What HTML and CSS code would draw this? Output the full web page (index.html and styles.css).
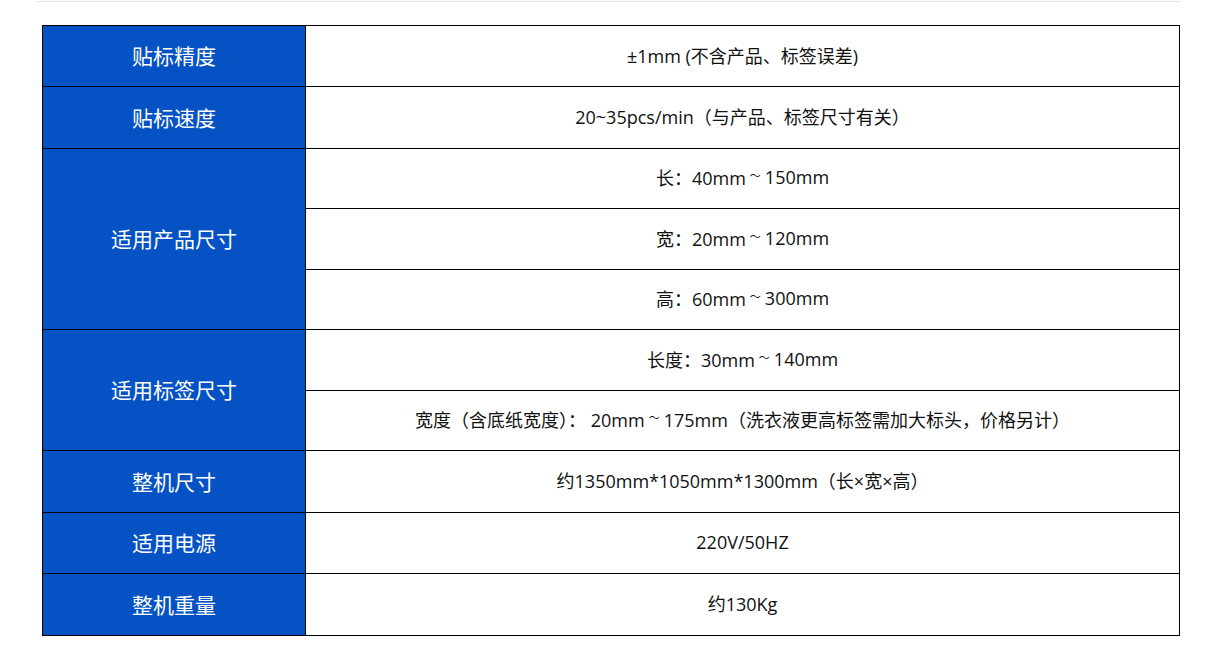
FILE: index.html
```html
<!DOCTYPE html>
<html lang="zh-CN">
<head>
<meta charset="utf-8">
<title>参数</title>
<link rel="stylesheet" href="styles.css">
</head>
<body>
<div class="page">
  <div class="spec">
    <div class="key">贴标精度</div>
    <div class="val">±1mm (不含产品、标签误差)</div>

    <div class="key">贴标速度</div>
    <div class="val">20~35pcs/min（与产品、标签尺寸有关）</div>

    <div class="key span3">适用产品尺寸</div>
    <div class="val">长：40mm<span class="tilde">～</span>150mm</div>
    <div class="val">宽：20mm<span class="tilde">～</span>120mm</div>
    <div class="val">高：60mm<span class="tilde">～</span>300mm</div>

    <div class="key span2">适用标签尺寸</div>
    <div class="val">长度：30mm<span class="tilde">～</span>140mm</div>
    <div class="val">宽度（含底纸宽度）：&nbsp;20mm<span class="tilde">～</span>175mm（洗衣液更高标签需加大标头，价格另计）</div>

    <div class="key">整机尺寸</div>
    <div class="val">约1350mm*1050mm*1300mm（长×宽×高）</div>

    <div class="key">适用电源</div>
    <div class="val">220V/50HZ</div>

    <div class="key">整机重量</div>
    <div class="val">约130Kg</div>
  </div>
</div>
</body>
</html>
```

FILE: styles.css
```css
html, body {
  margin: 0;
  padding: 0;
  background: #ffffff;
}

body {
  padding-top: 1px;
  font-family: "Open Sans", "Noto Sans CJK SC", sans-serif;
}

.page {
  margin-left: 37px;
  width: 1143px;
  border-top: 1px solid #e3e3e3;
  padding-top: 23px;
}

.spec {
  margin-left: 5px;
  width: 1138px;
  box-sizing: border-box;
  display: grid;
  grid-template-columns: 263px 874px;
  grid-template-rows: 61px 62px 60px 61px 60px 61px 60px 62px 61px 62px;
  border-top: 1px solid #000;
  border-left: 1px solid #000;
}

.key,
.val {
  box-sizing: border-box;
  border-right: 1px solid #000;
  border-bottom: 1px solid #000;
  display: flex;
  align-items: center;
  justify-content: center;
  text-align: center;
}

.key {
  grid-column: 1;
  background: #0552c5;
  color: #ffffff;
  font-size: 21px;
  font-family: "Noto Sans CJK SC", sans-serif;
  padding-bottom: 2px;
}

.val {
  grid-column: 2;
  color: #111111;
  font-size: 18px;
  padding-bottom: 3px;
}

.tilde {
  font-size: 11px;
  padding: 0 4px;
  position: relative;
  top: -2px;
}

.span3 {
  grid-row: span 3;
}

.span2 {
  grid-row: span 2;
}
```
